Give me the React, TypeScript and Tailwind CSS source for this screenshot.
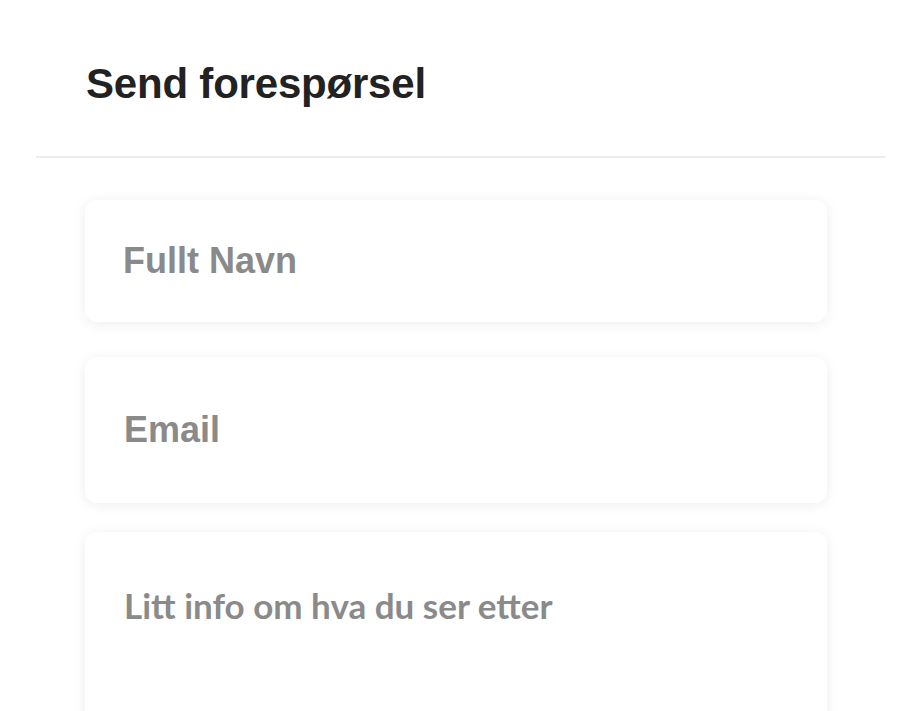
export default function App() {
  return (
    <div className="h-[711px] w-[906px] bg-white overflow-hidden">
      {/* Header */}
      <div className="pt-[63px] pl-[86px] h-[156px]">
        <h1 className="text-[42px] leading-none font-bold text-[#222222] font-['Liberation_Sans',Arial,sans-serif] tracking-[-0.2px]">
          Send forespørsel
        </h1>
      </div>
      <div className="ml-[36px] w-[849px] h-[2px] bg-[#ececec]" />

      {/* Form fields */}
      <div className="pl-[85px] pt-[42px] flex flex-col">
        <div className="w-[742px] h-[122px] rounded-[12px] bg-white shadow-[0_2px_14px_rgba(0,0,0,0.07)] flex items-center pl-[38px]">
          <span className="text-[36px] font-bold text-[#8a8a8a] font-['Liberation_Sans',Arial,sans-serif]">
            Fullt Navn
          </span>
        </div>
        <div className="mt-[35px] w-[742px] h-[146px] rounded-[12px] bg-white shadow-[0_2px_14px_rgba(0,0,0,0.07)] flex items-center pl-[39px]">
          <span className="text-[36px] font-bold text-[#8a8a8a] font-['Liberation_Sans',Arial,sans-serif]">
            Email
          </span>
        </div>
        <div className="mt-[29px] w-[742px] h-[220px] rounded-[12px] bg-white shadow-[0_2px_14px_rgba(0,0,0,0.07)] pl-[39px] pt-[56px]">
          <span className="block text-[35px] leading-none font-bold text-[#8a8a8a] font-['Lato',sans-serif]">
            Litt info om hva du ser etter
          </span>
        </div>
      </div>
    </div>
  );
}
